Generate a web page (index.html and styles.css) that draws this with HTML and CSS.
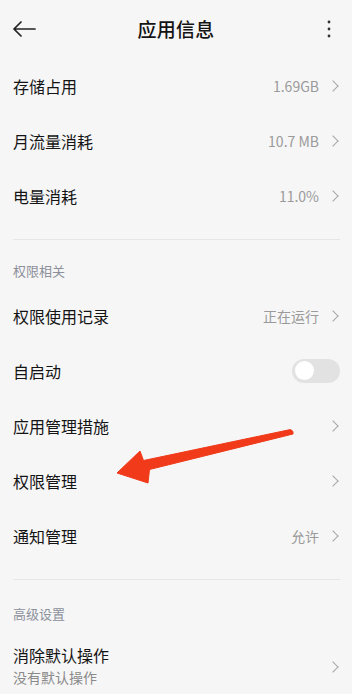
FILE: index.html
```html
<!DOCTYPE html>
<html lang="zh-CN">
<head>
<meta charset="utf-8">
<title>应用信息</title>
<link rel="stylesheet" href="styles.css">
</head>
<body>
<div class="screen">
  <header class="topbar">
    <svg class="back" width="24" height="16" viewBox="0 0 24 16"><path d="M23 8H2M9 1L2 8l7 7" fill="none" stroke="#222" stroke-width="1.7" stroke-linecap="round" stroke-linejoin="round"/></svg>
    <h1 class="title">应用信息</h1>
    <svg class="more" width="6" height="20" viewBox="0 0 6 20"><circle cx="3" cy="3" r="1.4" fill="#333"/><circle cx="3" cy="10" r="1.4" fill="#333"/><circle cx="3" cy="17" r="1.4" fill="#333"/></svg>
  </header>

  <ul class="list">
    <li class="row"><span class="label">存储占用</span><span class="value">1.69GB</span><i class="chev"></i></li>
    <li class="row"><span class="label">月流量消耗</span><span class="value">10.7 MB</span><i class="chev"></i></li>
    <li class="row"><span class="label">电量消耗</span><span class="value">11.0%</span><i class="chev"></i></li>
  </ul>
  <div class="divider"></div>

  <div class="section">权限相关</div>
  <ul class="list">
    <li class="row"><span class="label">权限使用记录</span><span class="value">正在运行</span><i class="chev"></i></li>
    <li class="row"><span class="label">自启动</span><span class="switch"><span class="knob"></span></span></li>
    <li class="row"><span class="label">应用管理措施</span><i class="chev"></i></li>
    <li class="row"><span class="label">权限管理</span><i class="chev"></i></li>
    <li class="row"><span class="label">通知管理</span><span class="value">允许</span><i class="chev"></i></li>
  </ul>
  <div class="divider second"></div>

  <div class="section adv">高级设置</div>
  <ul class="list">
    <li class="row double">
      <span class="texts"><span class="label">消除默认操作</span><span class="sub">没有默认操作</span></span>
      <i class="chev"></i>
    </li>
  </ul>

  <svg class="annot" width="352" height="694" viewBox="0 0 352 694">
    <polygon points="117,473 140,451 143.5,460.5 290.5,429.5 293,431.5 293,434 149.5,469.5 148,483" fill="#f03a1a" stroke="#f03a1a" stroke-width="1" stroke-linejoin="round"/>
  </svg>
</div>
</body>
</html>
```

FILE: styles.css
```css
* { box-sizing: border-box; margin: 0; padding: 0; }
html, body { background: #f6f6f6; }
body {
  font-family: "Noto Sans CJK SC", "Noto Sans", sans-serif;
  color: #141414;
  width: 352px;
  height: 694px;
  overflow: hidden;
}
.screen { position: relative; width: 352px; height: 694px; }

.topbar {
  height: 58px;
  display: flex;
  align-items: center;
  justify-content: space-between;
  padding: 0 20px 0 12px;
  position: relative;
}
.back { display: block; }
.title {
  position: absolute;
  left: 0; right: 0;
  text-align: center;
  font-size: 19px;
  font-weight: 500;
  line-height: 58px;
  pointer-events: none;
  letter-spacing: 0.3px;
}
.more { display: block; }

.list { list-style: none; }
.row {
  height: 55px;
  display: flex;
  align-items: center;
  padding: 0 12px 0 13px;
}
.label {
  font-size: 16px;
  line-height: 20px;
  flex: 1;
  color: #141414;
}
.value {
  font-size: 14px;
  color: #9a9a9a;
  margin-right: 10px;
  line-height: 20px;
}
.chev {
  display: block;
  width: 8px;
  height: 8px;
  border-right: 1.5px solid #a6a6a6;
  border-top: 1.5px solid #a6a6a6;
  transform: rotate(45deg);
  margin-right: 3px;
}

.divider {
  height: 1px;
  background: #e6e6e6;
  margin: 16px 12px 0 13px;
}
.divider.second { margin-top: 16px; }

.section {
  font-size: 13px;
  line-height: 18px;
  color: #8c909b;
  padding: 22px 13px 8px;
}
.section.adv { padding-top: 25px; }

.switch {
  width: 48px;
  height: 24px;
  border-radius: 12px;
  background: #e2e2e2;
  display: flex;
  align-items: center;
  padding: 0 3px;
}
.knob {
  width: 19px;
  height: 19px;
  border-radius: 50%;
  background: #ffffff;
}

.row.double { height: 66px; align-items: flex-start; padding-top: 14px; }
.row.double .chev { margin-top: 18px; }
.texts { flex: 1; display: flex; flex-direction: column; gap: 3px; }
.sub {
  font-size: 14px;
  line-height: 18px;
  color: #8a8a8a;
}

.annot {
  position: absolute;
  left: 0;
  top: 0;
  pointer-events: none;
}
```
